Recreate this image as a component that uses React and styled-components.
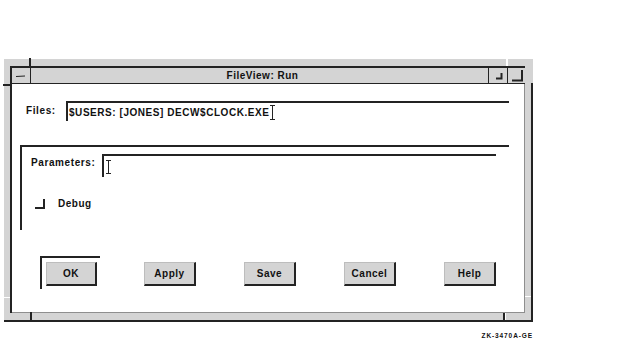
import React from "react";
import styled, { createGlobalStyle } from "styled-components";

const GlobalStyle = createGlobalStyle`
  html, body { margin: 0; padding: 0; background: #ffffff; }
  body { font-family: "Liberation Sans", Arial, sans-serif; color: #111; }
  * { box-sizing: border-box; }
`;

const DARK = "#232323";
const GRAY = "#d4d4d4";

const Page = styled.div`
  width: 642px;
  height: 341px;
  padding: 59px 0 0 4px;
`;

const Frame = styled.div`
  position: relative;
  width: 529px;
  height: 263px;
  background: ${GRAY};
  border-right: 2px solid ${DARK};
  border-bottom: 2px solid ${DARK};
  padding: 7px 6px 7px 6px;
  display: flex;
`;

const Tick = styled.span`
  position: absolute;
  background: ${(p) => p.$color || DARK};
  left: ${(p) => p.$x}px;
  top: ${(p) => p.$y}px;
  width: ${(p) => p.$w}px;
  height: ${(p) => p.$h}px;
`;

const Window = styled.div`
  flex: 1;
  display: flex;
  flex-direction: column;
  border-top: 2px solid ${DARK};
  border-left: 2px solid ${DARK};
`;

const TitleBar = styled.div`
  height: 16px;
  flex: none;
  display: flex;
  align-items: stretch;
  background: ${GRAY};
  border-bottom: 1px solid ${DARK};
`;

const TitleButton = styled.div`
  width: ${(p) => p.$w}px;
  display: flex;
  align-items: center;
  justify-content: center;
  border-left: ${(p) => (p.$side === "left" ? "none" : `1px solid ${DARK}`)};
  border-right: ${(p) => (p.$side === "left" ? `1px solid ${DARK}` : "none")};
`;

const Title = styled.div`
  flex: 1;
  text-align: center;
  font-weight: bold;
  font-size: 10px;
  letter-spacing: 0.5px;
  line-height: 15px;
  padding-left: 6px;
`;

const Body = styled.div`
  flex: 1;
  background: #ffffff;
  border-right: 1px solid #8e8e8e;
  border-bottom: 1px solid #8e8e8e;
  display: flex;
  flex-direction: column;
`;

const FieldRow = styled.div`
  display: flex;
  align-items: flex-start;
  padding-left: ${(p) => p.$pl}px;
  margin-top: ${(p) => p.$mt}px;
`;

const Label = styled.div`
  width: ${(p) => p.$w}px;
  font-weight: bold;
  font-size: 10px;
  letter-spacing: 0.6px;
  padding-top: ${(p) => p.$pt}px;
`;

const TextField = styled.div`
  width: ${(p) => p.$w}px;
  height: ${(p) => p.$h}px;
  border-top: 2px solid ${DARK};
  border-left: 2px solid ${DARK};
  display: flex;
  align-items: center;
  padding-left: 1px;
  font-weight: bold;
  font-size: 10px;
  letter-spacing: 0.55px;
  white-space: nowrap;
`;

const Group = styled.div`
  margin: 24px 0 0 8px;
  width: 489px;
  height: 85px;
  border-top: 2px solid ${DARK};
  border-left: 2px solid ${DARK};
  display: flex;
  flex-direction: column;
`;

const ToggleRow = styled.div`
  display: flex;
  align-items: center;
  margin: 21px 0 0 13px;
  gap: 13px;
`;

const Toggle = styled.span`
  width: 10px;
  height: 10px;
  border-right: 2px solid ${DARK};
  border-bottom: 2px solid ${DARK};
`;

const ToggleLabel = styled.span`
  font-weight: bold;
  font-size: 10px;
  letter-spacing: 0.5px;
`;

const ButtonRow = styled.div`
  display: flex;
  align-items: flex-start;
  margin-top: 26px;
  padding-left: 28px;
  gap: 48px;
`;

const DefaultRing = styled.div`
  width: 60px;
  height: 33px;
  border-top: 2px solid ${DARK};
  border-left: 2px solid ${DARK};
  padding: 4px 3px 3px 4px;
  margin-right: -4px;
`;

const PushButton = styled.div`
  width: ${(p) => p.$w}px;
  height: 24px;
  margin-top: ${(p) => (p.$inRing ? 0 : 6)}px;
  background: ${GRAY};
  border-top: 1px solid #bdbdbd;
  border-left: 1px solid #bdbdbd;
  border-right: 2px solid ${DARK};
  border-bottom: 2px solid ${DARK};
  display: flex;
  align-items: center;
  justify-content: center;
  font-weight: bold;
  font-size: 10px;
  letter-spacing: 0.5px;
  padding-bottom: 1px;
`;

const Caption = styled.div`
  width: 529px;
  margin-top: 10px;
  text-align: right;
  font-weight: bold;
  font-size: 6.5px;
  letter-spacing: 0.9px;
`;

const IBeam = ({ h = 16 }) => (
  <svg width="5" height={h} viewBox={`0 0 5 ${h}`} style={{ marginLeft: 1 }}>
    <path d={`M0 0.5 H5 M2.5 0 V${h} M0 ${h - 0.5} H5`} stroke={DARK} strokeWidth="1" fill="none" />
  </svg>
);

const MinGlyph = () => (
  <svg width="10" height="4" viewBox="0 0 10 4">
    <path d="M0 3 L9 2.5 L9 1.5 L0 2 Z" fill={DARK} />
  </svg>
);

const SmallCorner = () => (
  <svg width="10" height="8" viewBox="0 0 10 8">
    <path d="M3 6.5 H8.5 V1" stroke={DARK} strokeWidth="2" fill="none" />
  </svg>
);

const BigCorner = () => (
  <svg width="14" height="12" viewBox="0 0 14 12">
    <path d="M2 10.5 H12 V0" stroke={DARK} strokeWidth="2" fill="none" />
  </svg>
);

const buttons = ["Apply", "Save", "Cancel", "Help"];

export default function App() {
  return (
    <>
      <GlobalStyle />
      <Page>
        <Frame>
          <Tick $x={25} $y={-1} $w={2} $h={8} />
          <Tick $x={-1} $y={25} $w={7} $h={2} />
          <Tick $x={26} $y={253} $w={2} $h={9} />
          <Tick $x={502} $y={0} $w={2} $h={7} $color="#ffffff" />
          <Tick $x={527} $y={0} $w={2} $h={24} $color={GRAY} />
          <Tick $x={0} $y={238} $w={6} $h={1} $color="#ffffff" />
          <Tick $x={521} $y={237} $w={6} $h={1} $color="#ffffff" />
          <Tick $x={499} $y={254} $w={2} $h={7} />
          <Tick $x={501} $y={254} $w={1} $h={7} $color="#ffffff" />
          <Window>
            <TitleBar>
              <TitleButton $w={19} $side="left">
                <MinGlyph />
              </TitleButton>
              <Title>FileView: Run</Title>
              <TitleButton $w={19}>
                <SmallCorner />
              </TitleButton>
              <TitleButton $w={18}>
                <BigCorner />
              </TitleButton>
            </TitleBar>
            <Body>
              <FieldRow $pl={14} $mt={17}>
                <Label $w={40} $pt={4}>Files:</Label>
                <TextField $w={443} $h={20}>
                  $USERS: [JONES] DECW$CLOCK.EXE
                  <IBeam h={15} />
                </TextField>
              </FieldRow>
              <Group>
                <FieldRow $pl={9} $mt={7}>
                  <Label $w={71} $pt={3}>Parameters:</Label>
                  <TextField $w={394} $h={23}>
                    <IBeam h={14} />
                  </TextField>
                </FieldRow>
                <ToggleRow>
                  <Toggle />
                  <ToggleLabel>Debug</ToggleLabel>
                </ToggleRow>
              </Group>
              <ButtonRow>
                <DefaultRing>
                  <PushButton $w={51} $inRing>
                    OK
                  </PushButton>
                </DefaultRing>
                {buttons.map((b) => (
                  <PushButton key={b} $w={52}>
                    {b}
                  </PushButton>
                ))}
              </ButtonRow>
            </Body>
          </Window>
        </Frame>
        <Caption>ZK-3470A-GE</Caption>
      </Page>
    </>
  );
}
